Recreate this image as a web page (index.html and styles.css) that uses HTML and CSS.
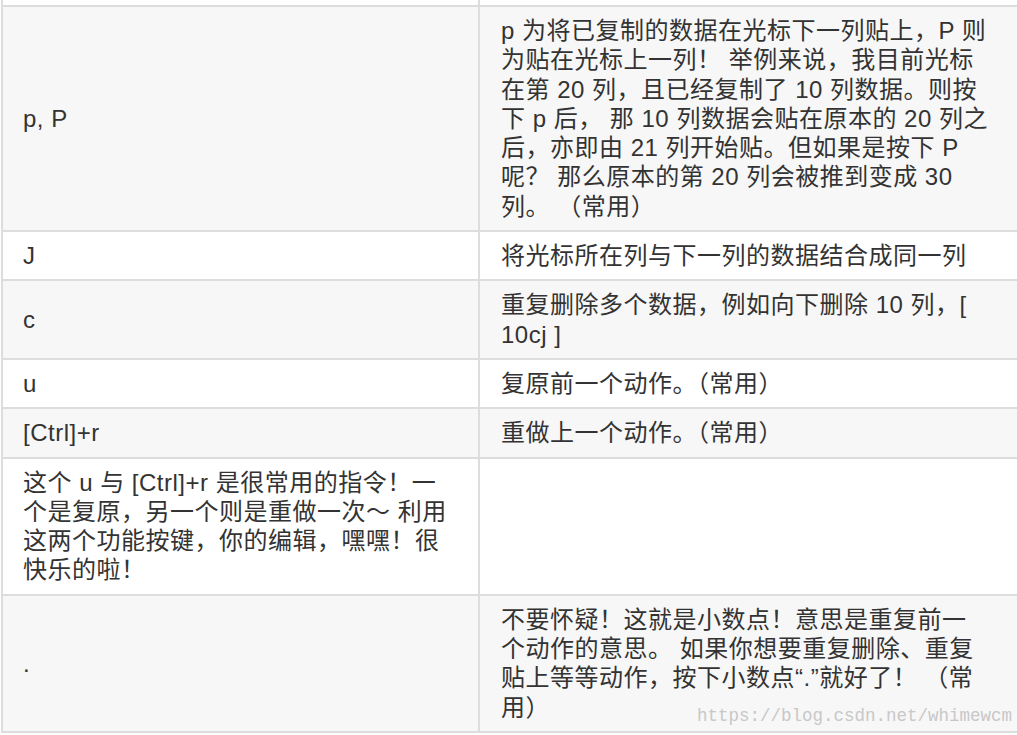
FILE: index.html
```html
<!DOCTYPE html>
<html lang="zh-CN">
<head>
<meta charset="utf-8">
<title>vim commands</title>
<link rel="stylesheet" href="styles.css">
</head>
<body>
<div class="page">
  <table class="cmd-table">
    <tr class="stub"><td class="key"></td><td class="desc"></td></tr>
    <tr class="alt">
      <td class="key">p, P</td>
      <td class="desc">p 为将已复制的数据在光标下一列贴上，P 则为贴在光标上一列！ 举例来说，我目前光标在第 20 列，且已经复制了 10 列数据。则按下 p 后， 那 10 列数据会贴在原本的 20 列之后，亦即由 21 列开始贴。但如果是按下 P 呢？ 那么原本的第 20 列会被推到变成 30 列。 （常用）</td>
    </tr>
    <tr>
      <td class="key">J</td>
      <td class="desc">将光标所在列与下一列的数据结合成同一列</td>
    </tr>
    <tr class="alt">
      <td class="key">c</td>
      <td class="desc">重复删除多个数据，例如向下删除 10 列，[ 10cj ]</td>
    </tr>
    <tr>
      <td class="key">u</td>
      <td class="desc">复原前一个动作。（常用）</td>
    </tr>
    <tr class="alt">
      <td class="key">[Ctrl]+r</td>
      <td class="desc">重做上一个动作。（常用）</td>
    </tr>
    <tr>
      <td class="key">这个 u 与 [Ctrl]+r 是很常用的指令！一个是复原，另一个则是重做一次～ 利用这两个功能按键，你的编辑，嘿嘿！很快乐的啦！</td>
      <td class="desc"></td>
    </tr>
    <tr class="alt">
      <td class="key">.</td>
      <td class="desc">不要怀疑！这就是小数点！意思是重复前一个动作的意思。 如果你想要重复删除、重复贴上等等动作，按下小数点“.”就好了！ （常用）</td>
    </tr>
  </table>
  <div class="watermark">https://blog.csdn.net/whimewcm</div>
</div>
</body>
</html>
```
FILE: styles.css
```css
html, body {
  margin: 0;
  padding: 0;
  background: #ffffff;
  overflow: hidden;
}

.page {
  position: relative;
  width: 1017px;
  height: 735px;
  overflow: hidden;
}

.cmd-table {
  width: 1030px;
  border-collapse: separate;
  border-spacing: 0;
  table-layout: fixed;
  margin-left: 1px;
  border-left: 2px solid #dddddd;
  font-family: "Liberation Sans", "Noto Sans CJK SC", sans-serif;
  font-size: 24px;
  line-height: 29.3px;
  letter-spacing: 0.5px;
  color: #333333;
}

.cmd-table td {
  padding: 9px 20px;
  border-bottom: 2px solid #dddddd;
  vertical-align: middle;
  background: #ffffff;
}

.cmd-table td.key {
  width: 435px;
  border-right: 2px solid #dddddd;
}

.cmd-table td.desc {
  width: 489px;
  padding-left: 21px;
  padding-right: 41px;
}

.cmd-table tr.alt td {
  background: #f7f7f7;
}

.cmd-table tr.stub td {
  height: 5px;
  padding-top: 0;
  padding-bottom: 0;
  font-size: 0;
  line-height: 0;
}

.watermark {
  position: absolute;
  right: 5px;
  bottom: 9px;
  font-family: "Liberation Mono", monospace;
  font-size: 17.5px;
  line-height: 20px;
  color: #c8c8c8;
}
```
